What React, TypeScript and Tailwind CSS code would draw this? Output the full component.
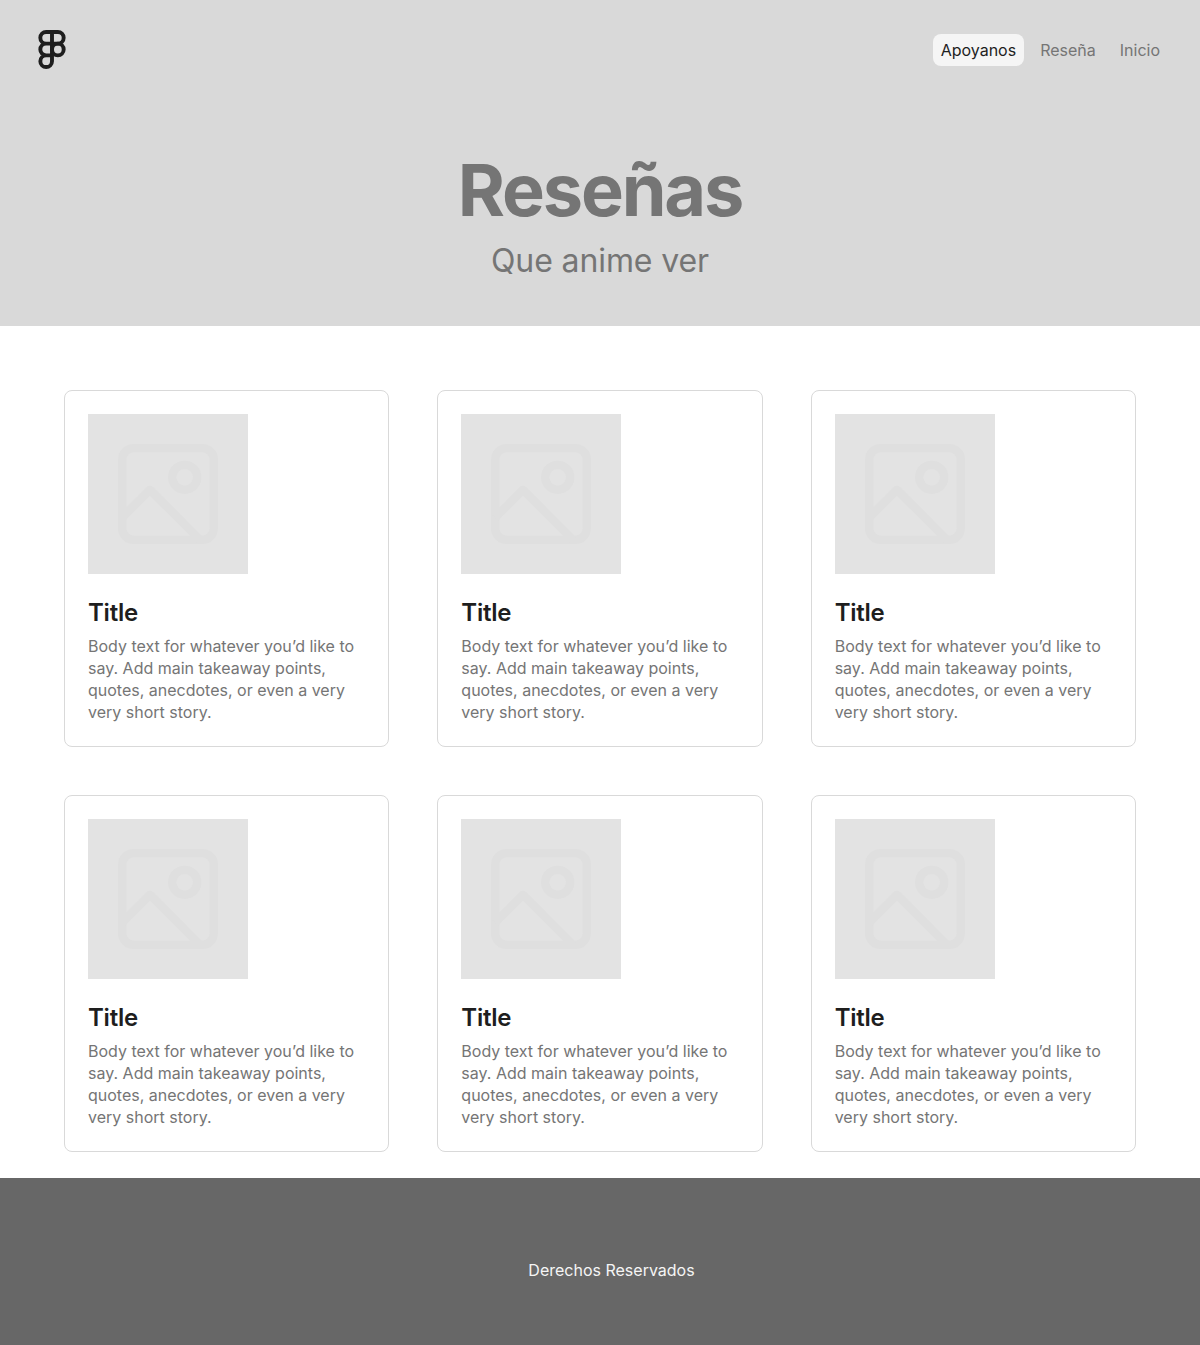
import React from "react";

function Logo() {
  return (
    <svg className="overflow-visible" width="30" height="39" viewBox="0 -0.25 30 39" fill="none" stroke="#1e1e1e" strokeWidth="3.9">
      <path d="M15 1.75H9.15a5.83 5.83 0 0 0 0 11.67H15zM15 1.75h5.85a5.83 5.83 0 0 1 0 11.67H15zM15 13.42H9.15a5.83 5.83 0 0 0 0 11.66H15zM15 25.08H9.15A5.83 5.83 0 1 0 15 30.92z" />
      <circle cx="20.85" cy="19.25" r="5.83" />
    </svg>
  );
}

function Placeholder() {
  return (
    <div className="flex h-40 w-40 items-center justify-center bg-[#e3e3e3]">
      <svg width="100" height="100" viewBox="0 0 100 100" fill="none" stroke="#dfdfdf" strokeWidth="8.33">
        <rect x="4.17" y="4.17" width="91.66" height="91.66" rx="11.5" />
        <circle cx="66.7" cy="33.3" r="12.5" />
        <path d="M4.17 73.6L31.95 45.8L82 95.83" strokeLinejoin="round" />
      </svg>
    </div>
  );
}

function Card() {
  return (
    <article className="flex h-[357px] flex-col gap-6 rounded-lg border border-[#d9d9d9] bg-white p-[23px]">
      <Placeholder />
      <div className="flex flex-col gap-2">
        <h2 className="text-2xl leading-[29px] font-semibold tracking-[-0.24px] text-[#1e1e1e]">Title</h2>
        <p className="text-base leading-[22px] text-[#757575]">
          Body text for whatever you’d like to say. Add main takeaway points, quotes, anecdotes, or even a very very short story.
        </p>
      </div>
    </article>
  );
}

export default function App() {
  return (
    <div className="flex h-[1345px] w-[1200px] flex-col bg-white font-['Inter',sans-serif]">
      <header className="h-[326px] bg-[#d9d9d9]">
        <div className="flex h-[99px] items-center justify-between pr-8 pl-[37px]">
          <Logo />
          <nav className="flex gap-2 text-base leading-4 text-[#757575]">
            <a className="rounded-lg bg-[#f5f5f5] p-2 text-[#1e1e1e]">Apoyanos</a>
            <a className="p-2">Reseña</a>
            <a className="p-2">Inicio</a>
          </nav>
        </div>
        <div className="flex flex-col items-center gap-[9px] pt-12 text-[#757575]">
          <h1 className="text-[72px] leading-[86px] font-bold tracking-[-2.16px]">Reseñas</h1>
          <p className="text-[32px] leading-[38px] tracking-[-0.1px]">Que anime ver</p>
        </div>
      </header>
      <main className="grid h-[852px] grid-cols-3 content-start gap-12 px-16 pt-16">
        {[0, 1, 2, 3, 4, 5].map((i) => (
          <Card key={i} />
        ))}
      </main>
      <footer className="flex h-[167px] justify-center bg-[#676767] pt-[81px] pl-[23px] text-base leading-[22px] text-[#f5f5f5]">
        Derechos Reservados
      </footer>
    </div>
  );
}
